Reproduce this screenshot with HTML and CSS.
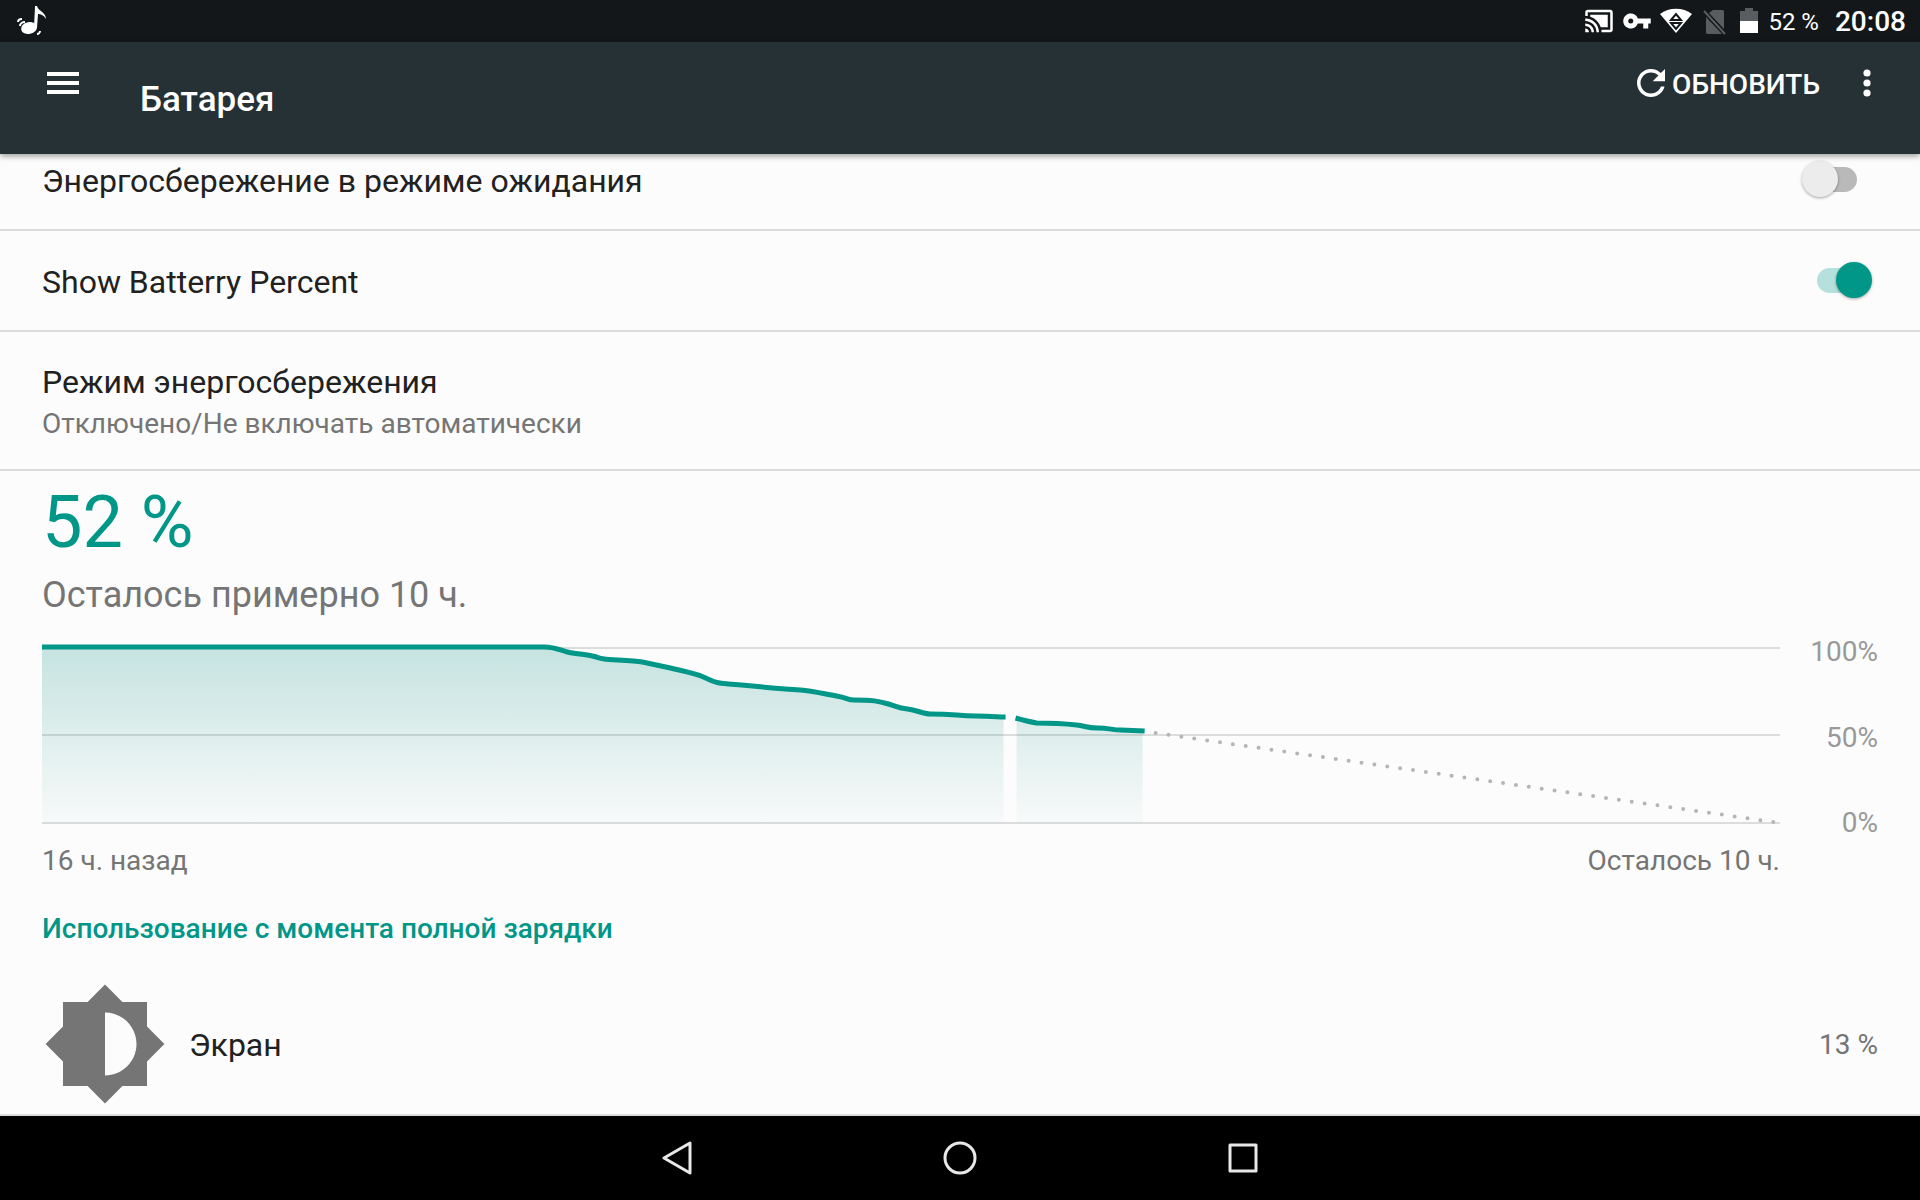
FILE: index.html
```html
<!DOCTYPE html>
<html lang="ru">
<head>
    <meta charset="UTF-8">
    <meta name="viewport" content="width=device-width, initial-scale=1.0">
    <title>Батарея</title>
    <link rel="stylesheet" href="styles.css">
</head>
<body>
    <div class="status-bar">
        <svg class="note" width="30" height="30" viewBox="0 0 30 30">
            <ellipse cx="12" cy="22" rx="8" ry="6" transform="rotate(-12 12 22)"/>
            <path d="M18 0h2c1 5 9 6 9 13-2-4-6-5-8-5l-1 14h-3z"/>
            <path class="line" d="M1 16c0-2 2-3 4-3M3 20c0-2 2-4 5-4M20 28c2 0 3-2 3-3"/>
        </svg>
        <div class="status-icons">
            <svg width="30" height="30" viewBox="0 0 24 24">
                <path d="M1 18v3h3c0-1.660-1.340-3-3-3zm0-4v2c2.760 0 5 2.240 5 5h2c0-3.870-3.130-7-7-7zm18-7H5v1.630c3.960 1.280 7.090 4.410 8.370 8.370H19V7zM1 10v2c4.970 0 9 4.030 9 9h2c0-6.080-4.930-11-11-11zm20-7H3c-1.100 0-2 .9-2 2v3h2V5h18v14h-7v2h7c1.100 0 2-.9 2-2V5c0-1.100-.9-2-2-2z"/>
            </svg>
            <svg width="30" height="30" viewBox="0 0 24 24">
                <path d="M12.650 10A6 6 0 1 0 12.650 14H17v4h4v-4h2v-4zM7 14a2 2 0 1 1 0-4 2 2 0 0 1 0 4z"/>
            </svg>
            <svg width="32" height="26" viewBox="0 0 32 26">
                <path d="M16 25 0 6C9-1 23-1 32 6z"/>
                <path class="arrows" d="M11 12 16 6l5 6zM11 15h10l-5 6z"/>
            </svg>
            <svg class="dim" width="28" height="30" viewBox="0 0 28 30">
                <path d="M13 4h9c2 0 2 1 2 2v17L9 7zM6 11l16 17H8c-2 0-2-1-2-2z"/>
                <path class="slash" d="M4 5l21 23"/>
            </svg>
            <svg width="18" height="26" viewBox="0 0 18 26">
                <path class="empty" d="M5 0h8v3h5v10H0V3h5z"/>
                <path d="M0 13h18v12H0z"/>
            </svg>
            <span class="level">52 %</span>
            <span class="clock">20:08</span>
        </div>
    </div>

    <header class="app-bar">
        <button class="menu" aria-label="Меню">
            <svg width="32" height="22" viewBox="0 0 32 22"><path d="M0 0h32v4H0zM0 9h32v4H0zM0 18h32v4H0z"/></svg>
        </button>
        <h1>Батарея</h1>
        <button class="refresh">
            <svg width="28" height="28" viewBox="4 4 16 16"><path d="M17.650 6.350C16.200 4.900 14.210 4 12 4c-4.420 0-7.990 3.580-7.990 8s3.570 8 7.990 8c3.730 0 6.840-2.550 7.730-6h-2.080c-.82 2.330-3.040 4-5.650 4-3.310 0-6-2.690-6-6s2.690-6 6-6c1.660 0 3.140.69 4.220 1.780L13 11h7V4l-2.350 2.350z"/></svg>
            <span>ОБНОВИТЬ</span>
        </button>
        <button class="more" aria-label="Ещё">
            <svg width="8" height="28" viewBox="0 0 8 28"><circle cx="4" cy="4" r="3.600"/><circle cx="4" cy="14" r="3.600"/><circle cx="4" cy="24" r="3.600"/></svg>
        </button>
    </header>

    <main>
        <div class="content">
            <div class="row">
                <label for="standby">Энергосбережение в режиме ожидания</label>
                <input type="checkbox" id="standby" class="switch">
            </div>
            <div class="row">
                <label for="percent">Show Batterry Percent</label>
                <input type="checkbox" id="percent" class="switch" checked>
            </div>
            <div class="row saver">
                <div>
                    <div>Режим энергосбережения</div>
                    <div class="summary">Отключено/Не включать автоматически</div>
                </div>
            </div>

            <section class="battery">
                <div class="charge">52 %</div>
                <div class="remaining">Осталось примерно 10 ч.</div>
                <div class="chart">
                    <svg viewBox="0 0 1737 180" preserveAspectRatio="none">
                        <defs>
                            <linearGradient id="fade" gradientUnits="userSpaceOnUse" x1="0" y1="0" x2="0" y2="178">
                                <stop offset="0" stop-color="#00897b" stop-opacity="0.22"/>
                                <stop offset="1" stop-color="#00897b" stop-opacity="0.02"/>
                            </linearGradient>
                        </defs>
                        <path class="grid" d="M0 3H1737M0 90H1737M0 178H1737"/>
                        <path fill="url(#fade)" d="M0 2H505L516 3 531 8 550 10 560 14 579 15 598 17 625 22 653 29 674 37 686 39 705 40 731 43 758 45 794 50 811 55 823 55 844 58 855 62 874 65 888 69 907 69 933 71 961 72V178H0z"/>
                        <path fill="url(#fade)" d="M974 74 994 78 1034 79 1050 82 1067 83 1078 85 1100 86V178H974z"/>
                        <path class="curve" d="M0 2H502C512 2 518 5 525 7S542 9 550 11 555 13 562 14 590 15 600 17L628 23C640 26 652 28 661 32S672 38 686 39 700 40 710 41 745 44 758 45 782 49 794 51 804 55 812 55C830 55 836 56 846 59S855 63 865 64 880 69 888 69C912 69 915 71 933 71S955 72 963 72"/>
                        <path class="curve" d="M973 73C980 75 988 77 994 78 1008 78 1025 79 1034 80S1044 83 1055 83 1070 85 1078 85L1102 86"/>
                        <path class="forecast" d="M1113 88 1737 178"/>
                    </svg>
                    <div class="scale">
                        <span>100%</span>
                        <span>50%</span>
                        <span>0%</span>
                    </div>
                    <div class="times">
                        <span>16 ч. назад</span>
                        <span>Осталось 10 ч.</span>
                    </div>
                </div>
            </section>

            <h2>Использование с момента полной зарядки</h2>
            <div class="usage">
                <svg width="126" height="126" viewBox="0 0 24 24"><path d="M20 15.310L23.310 12 20 8.690V4h-4.690L12 .69 8.690 4H4v4.690L.69 12 4 15.310V20h4.690L12 23.310 15.310 20H20v-4.690zM12 18V6c3.310 0 6 2.690 6 6s-2.690 6-6 6z"/></svg>
                <span class="name">Экран</span>
                <span class="share">13 %</span>
            </div>
        </div>
    </main>

    <nav>
        <button aria-label="Назад"><svg width="34" height="34" viewBox="0 0 34 34"><path d="M30 2V32L4 17z"/></svg></button>
        <button aria-label="Домой"><svg width="34" height="34" viewBox="0 0 34 34"><circle cx="17" cy="17" r="15"/></svg></button>
        <button aria-label="Недавние"><svg width="34" height="34" viewBox="0 0 34 34"><path d="M4 4H30V30H4z"/></svg></button>
    </nav>
</body>
</html>
```
FILE: styles.css
```css
* { box-sizing: border-box; }
body { margin: 0; height: 100vh; display: flex; flex-direction: column; font-family: Roboto, sans-serif; font-size: 32px; line-height: 38px; color: #212121; background: #fcfcfc; }
button { padding: 0; border: 0; background: none; color: inherit; font: inherit; cursor: pointer; }
svg { display: block; flex: none; }

.status-bar { height: 42px; flex: none; display: flex; align-items: center; justify-content: space-between; padding: 0 14px 0 17px; background: #131719; color: #fff; }
.status-bar svg { fill: #fff; }
.note .line { fill: none; stroke: #fff; stroke-width: 2; }
.status-icons { display: flex; align-items: center; }
.status-icons svg { margin-right: 8px; }
.status-icons .arrows { stroke: #131719; stroke-width: 2; }
.status-icons .dim { fill: #5a5d5f; margin-right: 12px; }
.status-icons .slash { stroke: #5a5d5f; stroke-width: 2; }
.status-icons .empty { fill: #5a5d5f; }
.level { font-size: 24px; margin: 0 16px 0 2px; padding-top: 2px; }
.clock { font-size: 28px; font-weight: 500; padding-top: 2px; }

.app-bar { height: 112px; flex: none; display: flex; align-items: center; padding: 0 49px 0 47px; background: #263136; color: #fff; fill: #fff; box-shadow: 0 2px 6px rgba(0, 0, 0, 0.4); z-index: 1; }
.app-bar button { height: 82px; align-self: flex-start; }
.app-bar h1 { flex: 1; margin: 0 0 0 61px; padding-top: 4px; font-size: 35px; font-weight: 500; }
.app-bar .refresh { display: flex; align-items: center; gap: 7px; margin-right: 43px; font-size: 28px; font-weight: 500; }
.refresh span { padding-top: 4px; }

main { flex: 1; min-height: 0; overflow: hidden; border-bottom: 2px solid #dcdcdc; }
/* list is scrolled a little under the app bar */
.content { margin-top: -24px; }
.row { min-height: 101px; display: flex; align-items: center; justify-content: space-between; padding: 0 48px 0 42px; border-bottom: 2px solid #dcdcdc; }
.row label { padding-top: 2px; }
.saver { min-height: 139px; padding-top: 4px; }
.summary { margin-top: 4px; font-size: 28px; color: #757575; }

.switch { appearance: none; position: relative; width: 70px; height: 36px; margin: 0 0 2px; cursor: pointer; }
.switch::before { content: ""; position: absolute; left: 15px; top: 6px; width: 40px; height: 25px; border-radius: 13px; background: #b9b9b9; }
.switch::after { content: ""; position: absolute; left: 0; top: 0; width: 36px; height: 36px; border-radius: 50%; background: #ececec; box-shadow: 0 1px 3px rgba(0, 0, 0, 0.35); }
.switch:checked::before { background: #b5e0dc; }
.switch:checked::after { left: 34px; background: #009688; }

.battery { padding: 8px 42px 0; }
.charge { font-size: 72px; line-height: 88px; color: #009688; }
.remaining { font-size: 36px; line-height: 56px; color: #757575; }
.chart { display: grid; grid-template-columns: 1fr 98px; margin-top: 22px; font-size: 28px; color: #757575; }
.chart svg { width: 100%; height: 180px; overflow: visible; }
.chart path { vector-effect: non-scaling-stroke; }
.grid { stroke: #dcdcdc; stroke-width: 2; }
.curve { fill: none; stroke: #009688; stroke-width: 5; }
.forecast { stroke: #b5b5b5; stroke-width: 4; stroke-linecap: round; stroke-dasharray: 0 13; }
.scale { display: flex; flex-direction: column; justify-content: space-between; text-align: right; color: #999; margin: -12px 0 -17px; }
.times { display: flex; justify-content: space-between; margin-top: 17px; }

h2 { margin: 30px 42px 0; font-size: 28px; font-weight: 500; color: #009688; }
.usage { display: flex; align-items: center; padding: 0 42px; margin-top: 33px; }
.usage svg { fill: #757575; }
.name { flex: 1; margin-left: 21px; padding-top: 2px; }
.share { font-size: 28px; color: #757575; padding-top: 2px; }

nav { height: 84px; flex: none; display: flex; justify-content: center; background: #000; }
nav button { width: 283px; display: flex; align-items: center; justify-content: center; }
nav svg { fill: none; stroke: #e8e8e8; stroke-width: 3; stroke-linejoin: round; }
```
